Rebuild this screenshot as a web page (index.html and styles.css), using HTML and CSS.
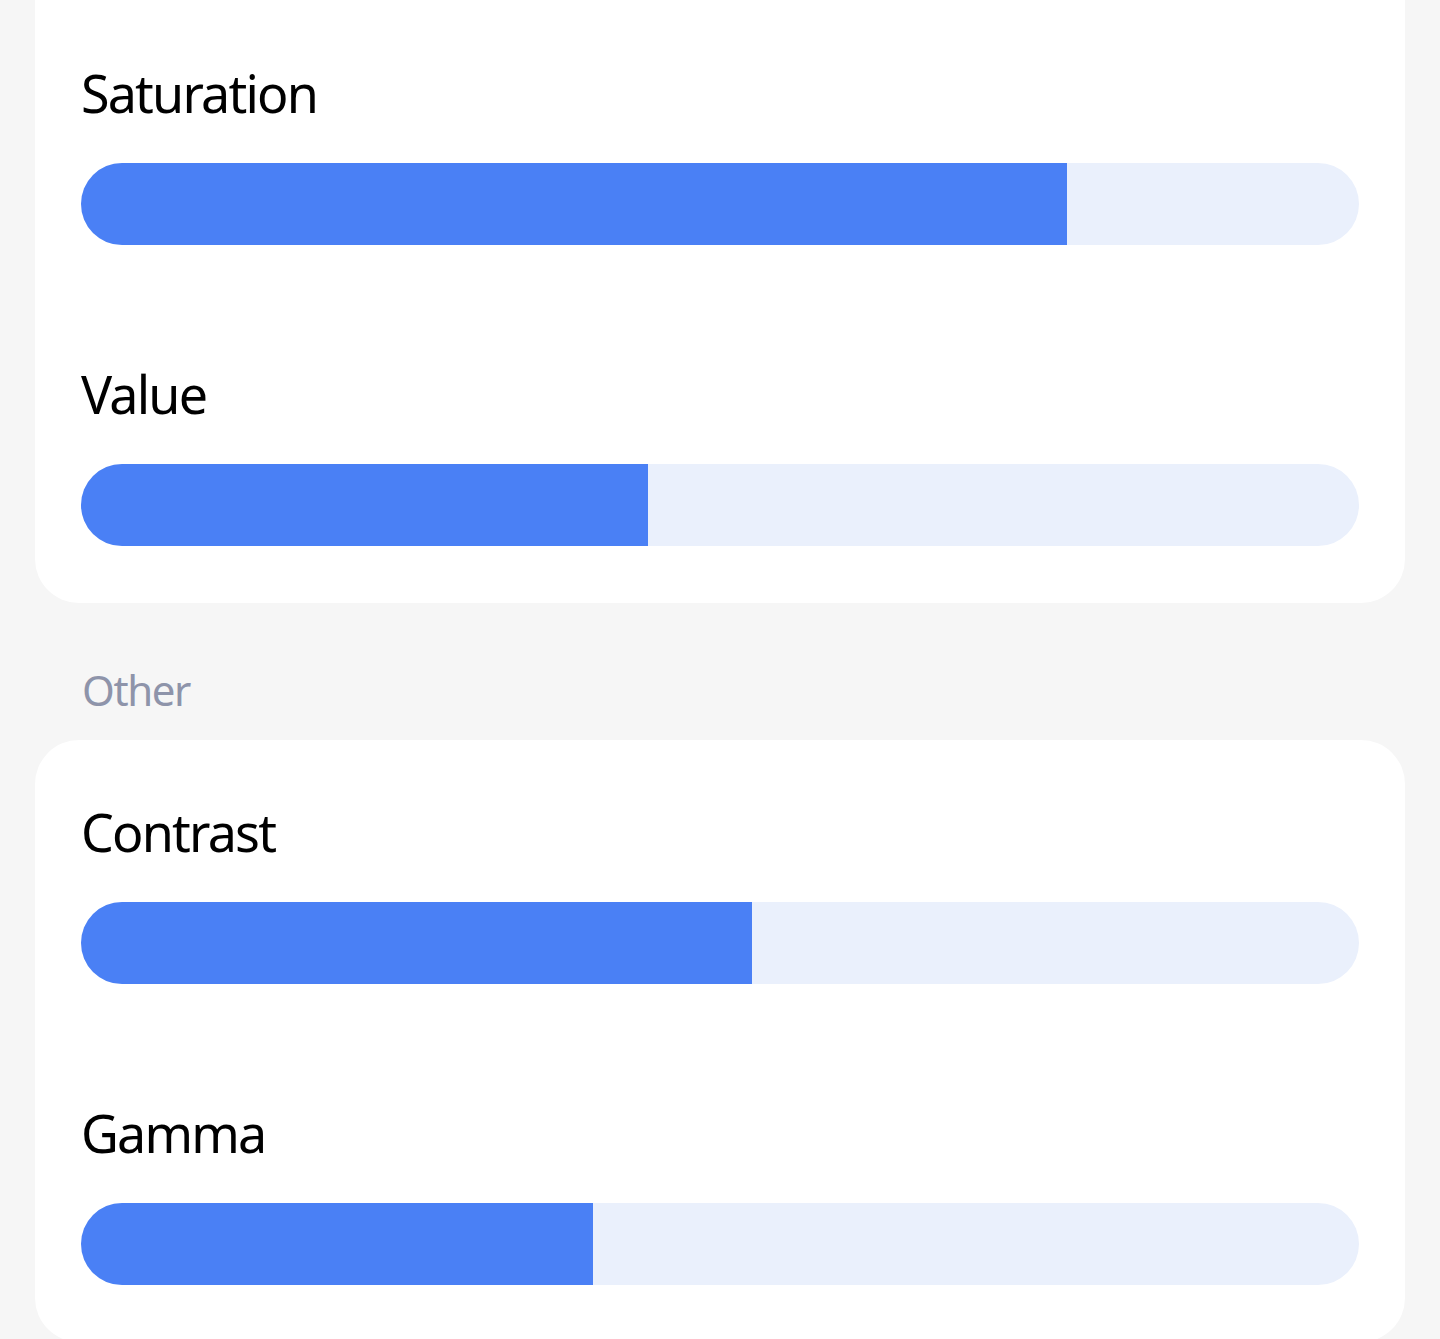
FILE: index.html
```html
<!DOCTYPE html>
<html lang="en">
<head>
<meta charset="utf-8">
<title>Color adjustments</title>
<link rel="stylesheet" href="styles.css">
</head>
<body>
<main class="page">
  <section class="card card-first">
    <div class="item">
      <div class="label">Saturation</div>
      <div class="track"><div class="fill" style="width:77.13%"></div></div>
    </div>
    <div class="item">
      <div class="label">Value</div>
      <div class="track"><div class="fill" style="width:44.4%"></div></div>
    </div>
  </section>
  <h2 class="section-title">Other</h2>
  <section class="card">
    <div class="item">
      <div class="label">Contrast</div>
      <div class="track"><div class="fill" style="width:52.54%"></div></div>
    </div>
    <div class="item">
      <div class="label">Gamma</div>
      <div class="track"><div class="fill" style="width:40.09%"></div></div>
    </div>
  </section>
</main>
</body>
</html>
```
FILE: styles.css
```css
html, body {
  margin: 0;
  padding: 0;
  background: #f6f6f6;
}
body {
  font-family: "Noto Sans", "Open Sans", sans-serif;
  color: #000;
  overflow: hidden;
}
.page {
  padding: 0 35px;
  display: flex;
  flex-direction: column;
}
.card {
  background: #fff;
  border-radius: 44px;
  padding: 56px 46px 57px 46px;
  display: flex;
  flex-direction: column;
  gap: 113px;
}
.card-first {
  margin-top: -50px;
  padding-top: 107px;
}
.item {
  display: flex;
  flex-direction: column;
  gap: 34px;
}
.label {
  font-size: 52px;
  line-height: 72px;
  font-weight: 400;
  letter-spacing: -1.8px;
}
.track {
  height: 82px;
  border-radius: 41px;
  background: #eaf0fc;
  overflow: hidden;
}
.fill {
  height: 100%;
  background: #4a80f5;
}
.section-title {
  margin: 59px 0 22px 0;
  padding-left: 47px;
  font-size: 42px;
  line-height: 56px;
  font-weight: 400;
  letter-spacing: -1.4px;
  color: #8e94aa;
}
```
